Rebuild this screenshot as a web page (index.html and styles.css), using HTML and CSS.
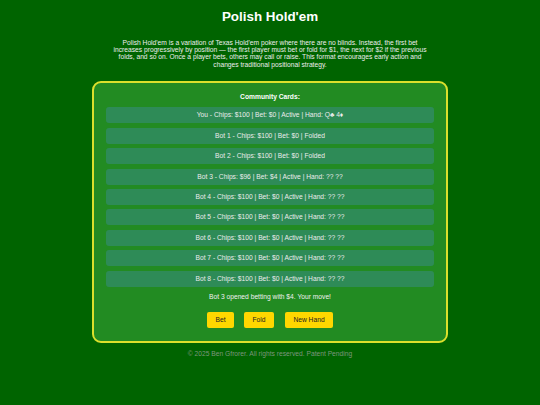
FILE: index.html
```html
<!DOCTYPE html>
<html>
<head>
<meta charset="utf-8">
<link rel="stylesheet" href="styles.css">
</head>
<body>
<h1 class="title">Polish Hold'em</h1>
<p class="intro">Polish Hold'em is a variation of Texas Hold'em poker where there are no blinds. Instead, the first bet increases progressively by position — the first player must bet or fold for $1, the next for $2 if the previous folds, and so on. Once a player bets, others may call or raise. This format encourages early action and changes traditional positional strategy.</p>
<main class="table">
  <div class="community">Community Cards:</div>
  <div class="players">
    <div class="player">You - Chips: $100 | Bet: $0 | Active | Hand: Q♣ 4♦</div>
    <div class="player">Bot 1 - Chips: $100 | Bet: $0 | Folded</div>
    <div class="player">Bot 2 - Chips: $100 | Bet: $0 | Folded</div>
    <div class="player">Bot 3 - Chips: $96 | Bet: $4 | Active | Hand: ?? ??</div>
    <div class="player">Bot 4 - Chips: $100 | Bet: $0 | Active | Hand: ?? ??</div>
    <div class="player">Bot 5 - Chips: $100 | Bet: $0 | Active | Hand: ?? ??</div>
    <div class="player">Bot 6 - Chips: $100 | Bet: $0 | Active | Hand: ?? ??</div>
    <div class="player">Bot 7 - Chips: $100 | Bet: $0 | Active | Hand: ?? ??</div>
    <div class="player">Bot 8 - Chips: $100 | Bet: $0 | Active | Hand: ?? ??</div>
  </div>
  <div class="message">Bot 3 opened betting with $4. Your move!</div>
  <div class="actions">
    <button class="btn btn-bet">Bet</button>
    <button class="btn btn-fold">Fold</button>
    <button class="btn btn-new">New Hand</button>
  </div>
</main>
<footer class="footer">© 2025 Ben Gfrorer. All rights reserved. Patent Pending</footer>
</body>
</html>
```
FILE: styles.css
```css
html, body {
  margin: 0;
  padding: 0;
}
body {
  background: #006400;
  font-family: "Liberation Sans", Arial, sans-serif;
  color: #f0f0f0;
  display: flex;
  flex-direction: column;
  align-items: center;
}
.title {
  margin: 9px 0 0;
  font-size: 13.4px;
  line-height: 16px;
  font-weight: bold;
  color: #ffffff;
}
.intro {
  margin: 13.5px 0 0;
  width: 318px;
  font-size: 6.7px;
  line-height: 7.35px;
  text-align: center;
  color: #eeeeee;
}
.table {
  margin-top: 13.5px;
  width: 328px;
  padding: 10px 12px 13px;
  background: #228b22;
  border: 2px solid #dbe02c;
  border-radius: 9px;
  display: flex;
  flex-direction: column;
  align-items: stretch;
}
.community {
  font-size: 6.7px;
  font-weight: bold;
  line-height: 8px;
  text-align: center;
  color: #ffffff;
  margin-bottom: 6px;
}
.players {
  display: flex;
  flex-direction: column;
  gap: 4.4px;
}
.player {
  height: 16px;
  line-height: 16px;
  background: #2e8b57;
  border-radius: 3px;
  font-size: 6.7px;
  text-align: center;
  color: #ececec;
}
.message {
  margin-top: 6px;
  line-height: 8px;
  font-size: 6.7px;
  text-align: center;
  color: #f0f0f0;
}
.actions {
  margin-top: 11px;
  display: flex;
  justify-content: center;
  gap: 10px;
}
.btn {
  height: 16px;
  padding: 0;
  border: none;
  border-radius: 2px;
  background: #ffd700;
  color: #222222;
  font-family: "Liberation Sans", Arial, sans-serif;
  font-size: 6.7px;
  cursor: pointer;
}
.btn-bet { width: 27px; }
.btn-fold { width: 30px; }
.btn-new { width: 48px; margin-left: 1px; }
.footer {
  margin-top: 7px;
  font-size: 6.7px;
  line-height: 8px;
  color: #7d957d;
}
```
